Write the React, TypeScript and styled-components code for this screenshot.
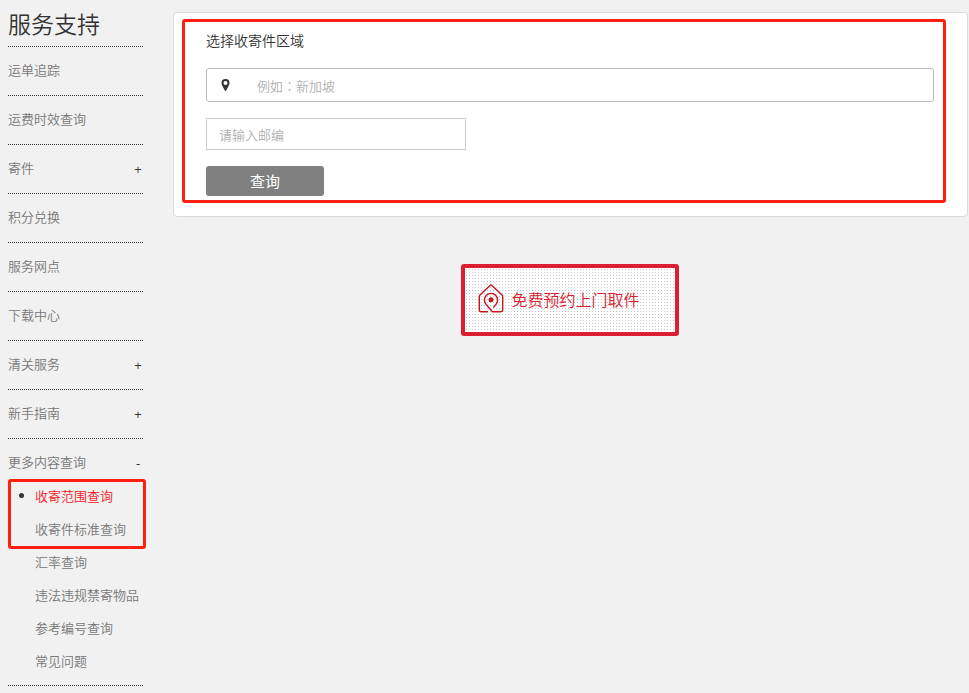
import React from "react";
import styled, { createGlobalStyle, css } from "styled-components";

const GlobalStyle = createGlobalStyle`
  *, *::before, *::after { box-sizing: border-box; }
  body {
    margin: 0;
    background: #f1f1f1;
    color: #333;
    font-family: "Noto Sans CJK SC", "Liberation Sans", sans-serif;
    font-size: 13px;
    font-weight: 350;
  }
  ul { margin: 0; padding: 0; list-style: none; }
  h1, h2 { margin: 0; }
  input, button { font: inherit; }
`;

const Page = styled.div`
  display: flex;
  align-items: flex-start;
  gap: 30px;
  padding: 0 1px 0 8px;
`;

const Sidebar = styled.nav`
  flex: none;
  width: 135px;
`;

const dottedLine = css`
  padding-bottom: 1px;
  background: repeating-linear-gradient(to right, #333 0 1px, transparent 1px 2px) bottom / 100% 1px no-repeat;
`;

const Title = styled.h1`
  ${dottedLine}
  padding: 2px 0 3px;
  font-size: 23px;
  font-weight: 350;
  line-height: 42px;
`;

const MenuItem = styled.li`
  ${dottedLine}
`;

const MenuHeader = styled.div<{ $open?: boolean }>`
  display: flex;
  justify-content: space-between;
  padding: 15px 0 ${(p) => (p.$open ? 9 : 17)}px;
  line-height: 16px;
`;

const MenuLink = styled.a<{ $active?: boolean }>`
  color: ${(p) => (p.$active ? "#f5141e" : "#777")};
  text-decoration: none;
  white-space: nowrap;
`;

const Toggle = styled.button`
  width: 10px;
  height: 16px;
  padding: 0;
  border: 0;
  background: none;
  color: #333;
  font-family: "Open Sans", sans-serif;
  font-weight: 400;
  line-height: 18px;
  text-align: center;
`;

const SubMenu = styled.ul`
  position: relative;
  padding-bottom: 8px;
`;

const SubItem = styled.li<{ $active?: boolean }>`
  display: flex;
  align-items: center;
  padding-left: 11px;
  line-height: 33px;

  &::before {
    content: "";
    width: 5px;
    height: 5px;
    margin-right: 11px;
    border-radius: 50%;
    background: ${(p) => (p.$active ? "#333" : "transparent")};
  }
`;

const Highlight = styled.span`
  position: absolute;
  border: 3px solid #ff2012;
  border-radius: 3px;
  pointer-events: none;
`;

const MenuHighlight = styled(Highlight)`
  top: 0;
  left: 0;
  right: -3px;
  height: 70px;
`;

const FormHighlight = styled(Highlight)`
  top: 6px;
  right: 21px;
  bottom: 13px;
  left: 8px;
`;

const Main = styled.main`
  flex: 1;
  min-width: 0;
  display: flex;
  flex-direction: column;
  align-items: center;
  gap: 47px;
  padding-top: 12px;
`;

const Card = styled.form`
  position: relative;
  display: flex;
  flex-direction: column;
  align-items: flex-start;
  gap: 16px;
  width: 100%;
  padding: 17px 33px 20px 32px;
  border: 1px solid #dadada;
  border-radius: 4px;
  background: #fff;
`;

const CardTitle = styled.h2`
  padding-bottom: 2px;
  font-size: 14px;
  font-weight: 350;
  line-height: 20px;
`;

const RegionField = styled.label`
  display: flex;
  align-items: center;
  width: 100%;
  height: 34px;
  padding-left: 13px;
  border: 1px solid #bbb;
  border-radius: 3px;
`;

const inputText = css`
  color: #333;
  background: none;
  outline: none;
  &::placeholder { color: #b0b0b0; opacity: 1; }
`;

const RegionInput = styled.input`
  ${inputText}
  flex: 1;
  min-width: 0;
  height: 32px;
  margin-left: 26px;
  padding: 0;
  border: 0;
  font-family: "Noto Sans CJK TC", "Noto Sans CJK SC", sans-serif;
`;

const PostcodeInput = styled.input`
  ${inputText}
  width: 260px;
  height: 32px;
  padding: 0 12px;
  border: 1px solid #ccc;
`;

const SubmitButton = styled.button`
  width: 118px;
  height: 30px;
  padding: 0;
  border: 0;
  border-radius: 3px;
  background: #808080;
  color: #fff;
  font-size: 15px;
  font-weight: 400;
  line-height: 30px;
`;

const PickupLink = styled.a`
  display: flex;
  align-items: center;
  gap: 8px;
  width: 218px;
  height: 72px;
  margin-right: 2px;
  padding: 0 13px 2px;
  border: 4px solid #dc1e32;
  border-radius: 3px;
  background: radial-gradient(circle, #c4c4c4 0 0.5px, transparent 1px) 0 0 / 3px 3px #fff;
  color: #dc1e32;
  font-size: 16px;
  text-decoration: none;
`;

const PinIcon = () => (
  <svg width="11" height="14" viewBox="0 0 11 14" aria-hidden="true">
    <path
      fill="#333"
      fillRule="evenodd"
      d="M5.500 1a4 4 0 0 0-4 4c0 1 .3 1.700.7 2.500l2.600 5c.3.600 1.100.6 1.400 0l2.600-5c.4-.8.7-1.500.7-2.500a4 4 0 0 0-4-4Zm0 2a2 2 0 1 1 0 4 2 2 0 0 1 0-4Z"
    />
  </svg>
);

const HomePinIcon = () => (
  <svg width="26" height="30" viewBox="0 0 26 30" fill="none" stroke="#cc1418" strokeWidth="1.400" aria-hidden="true">
    <path d="M10 27.800H3a1.700 1.700 0 0 1-1.700-1.700V12.700c0-.7.300-1.200.7-1.600L12.300 1.300c.5-.5.900-.5 1.400 0L24 11.100c.4.4.7.9.7 1.600v13.400a1.700 1.700 0 0 1-1.700 1.700h-8.500L8.400 20.700A6.600 6.600 0 1 1 17.900 20.400L15.400 23.600" />
    <circle cx="13" cy="15.800" r="2.500" fill="#c4161c" stroke="none" />
  </svg>
);

const menu = [
  { label: "运单追踪" },
  { label: "运费时效查询" },
  { label: "寄件", toggle: "+" },
  { label: "积分兑换" },
  { label: "服务网点" },
  { label: "下载中心" },
  { label: "清关服务", toggle: "+" },
  { label: "新手指南", toggle: "+" },
  {
    label: "更多内容查询",
    toggle: "-",
    children: ["收寄范围查询", "收寄件标准查询", "汇率查询", "违法违规禁寄物品", "参考编号查询", "常见问题"],
  },
];

export default function App() {
  return (
    <>
      <GlobalStyle />
      <Page>
        <Sidebar>
          <Title>服务支持</Title>
          <ul>
            {menu.map((item) => (
              <MenuItem key={item.label}>
                <MenuHeader $open={!!item.children}>
                  <MenuLink href="#">{item.label}</MenuLink>
                  {item.toggle && (
                    <Toggle type="button" aria-label={item.label} aria-expanded={!!item.children}>
                      {item.toggle}
                    </Toggle>
                  )}
                </MenuHeader>
                {item.children && (
                  <SubMenu>
                    {item.children.map((label, i) => (
                      <SubItem key={label} $active={i === 0}>
                        <MenuLink href="#" $active={i === 0}>{label}</MenuLink>
                      </SubItem>
                    ))}
                    <MenuHighlight as="li" aria-hidden="true" />
                  </SubMenu>
                )}
              </MenuItem>
            ))}
          </ul>
        </Sidebar>
        <Main>
          <Card onSubmit={(e) => e.preventDefault()}>
            <CardTitle>选择收寄件区域</CardTitle>
            <RegionField>
              <PinIcon />
              <RegionInput type="text" aria-label="选择收寄件区域" placeholder="例如：新加坡" />
            </RegionField>
            <PostcodeInput type="text" aria-label="请输入邮编" placeholder="请输入邮编" />
            <SubmitButton type="submit">查询</SubmitButton>
            <FormHighlight aria-hidden="true" />
          </Card>
          <PickupLink href="#">
            <HomePinIcon />
            免费预约上门取件
          </PickupLink>
        </Main>
      </Page>
    </>
  );
}
